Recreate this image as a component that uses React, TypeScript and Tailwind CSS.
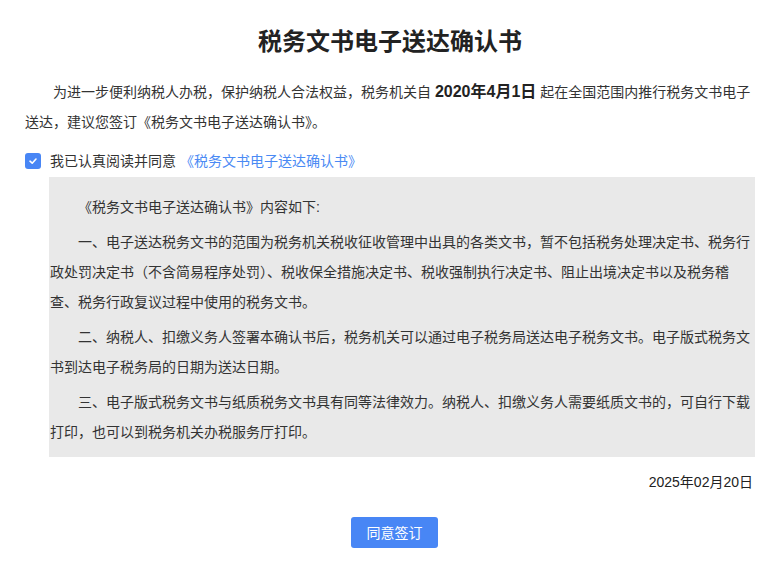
import React, { useState } from 'react';

const font = { fontFamily: '"Liberation Sans", "Noto Sans CJK SC", sans-serif' };

const App: React.FC = () => {
  const [checked, setChecked] = useState(true);

  return (
    <div className="bg-white text-[#333] px-[25px] pt-[26px] pb-8 font-['Liberation_Sans','Noto_Sans_CJK_SC',sans-serif]" style={font}>
      <h1 className="text-center text-2xl leading-8 font-bold text-[#222]">税务文书电子送达确认书</h1>

      <p className="mt-[19px] text-sm leading-[30px] indent-[28px]">
        为进一步便利纳税人办税，保护纳税人合法权益，税务机关自 <b className="text-base font-bold text-[#222]">2020年4月1日</b> 起在全国范围内推行税务文书电子送达，建议您签订《税务文书电子送达确认书》。
      </p>

      <label className="mt-[9px] flex items-center h-[30px] text-sm cursor-pointer">
        <span
          onClick={() => setChecked(!checked)}
          className={`w-4 h-4 rounded-[3px] flex items-center justify-center ${checked ? 'bg-[#4886f5]' : 'border border-gray-400 bg-white'}`}
        >
          {checked && (
            <svg width="10" height="10" viewBox="0 0 10 10" fill="none">
              <path d="M2 5.2 L4.2 7.2 L8 3" stroke="white" strokeWidth="1.6" strokeLinecap="round" strokeLinejoin="round" />
            </svg>
          )}
        </span>
        <span className="ml-[9px]">我已认真阅读并同意</span>
        <span className="ml-1 text-[#4a8af4]">《税务文书电子送达确认书》</span>
      </label>

      <div className="ml-6 mt-px bg-[#e9e9e9] pl-px pr-[5px] pt-[15px] pb-[5px] text-sm leading-[30px]">
        <p className="mb-[5px] indent-[28px]">《税务文书电子送达确认书》内容如下:</p>
        <p className="mb-[5px] indent-[28px]">
          一、电子送达税务文书的范围为税务机关税收征收管理中出具的各类文书，暂不包括税务处理决定书、税务行政处罚决定书（不含简易程序处罚）、税收保全措施决定书、税收强制执行决定书、阻止出境决定书以及税务稽查、税务行政复议过程中使用的税务文书。
        </p>
        <p className="mb-[5px] indent-[28px]">
          二、纳税人、扣缴义务人签署本确认书后，税务机关可以通过电子税务局送达电子税务文书。电子版式税务文书到达电子税务局的日期为送达日期。
        </p>
        <p className="mb-[5px] indent-[28px]">
          三、电子版式税务文书与纸质税务文书具有同等法律效力。纳税人、扣缴义务人需要纸质文书的，可自行下载打印，也可以到税务机关办税服务厅打印。
        </p>
      </div>

      <div className="mt-[10px] text-right text-sm leading-[30px] pr-[2px] text-[#222]">2025年02月20日</div>

      <div className="mt-5 flex justify-center pl-[9px]">
        <button className="w-[87px] h-[31px] rounded-[3px] bg-[#4886f5] text-white text-sm">同意签订</button>
      </div>
    </div>
  );
};

export default App;
